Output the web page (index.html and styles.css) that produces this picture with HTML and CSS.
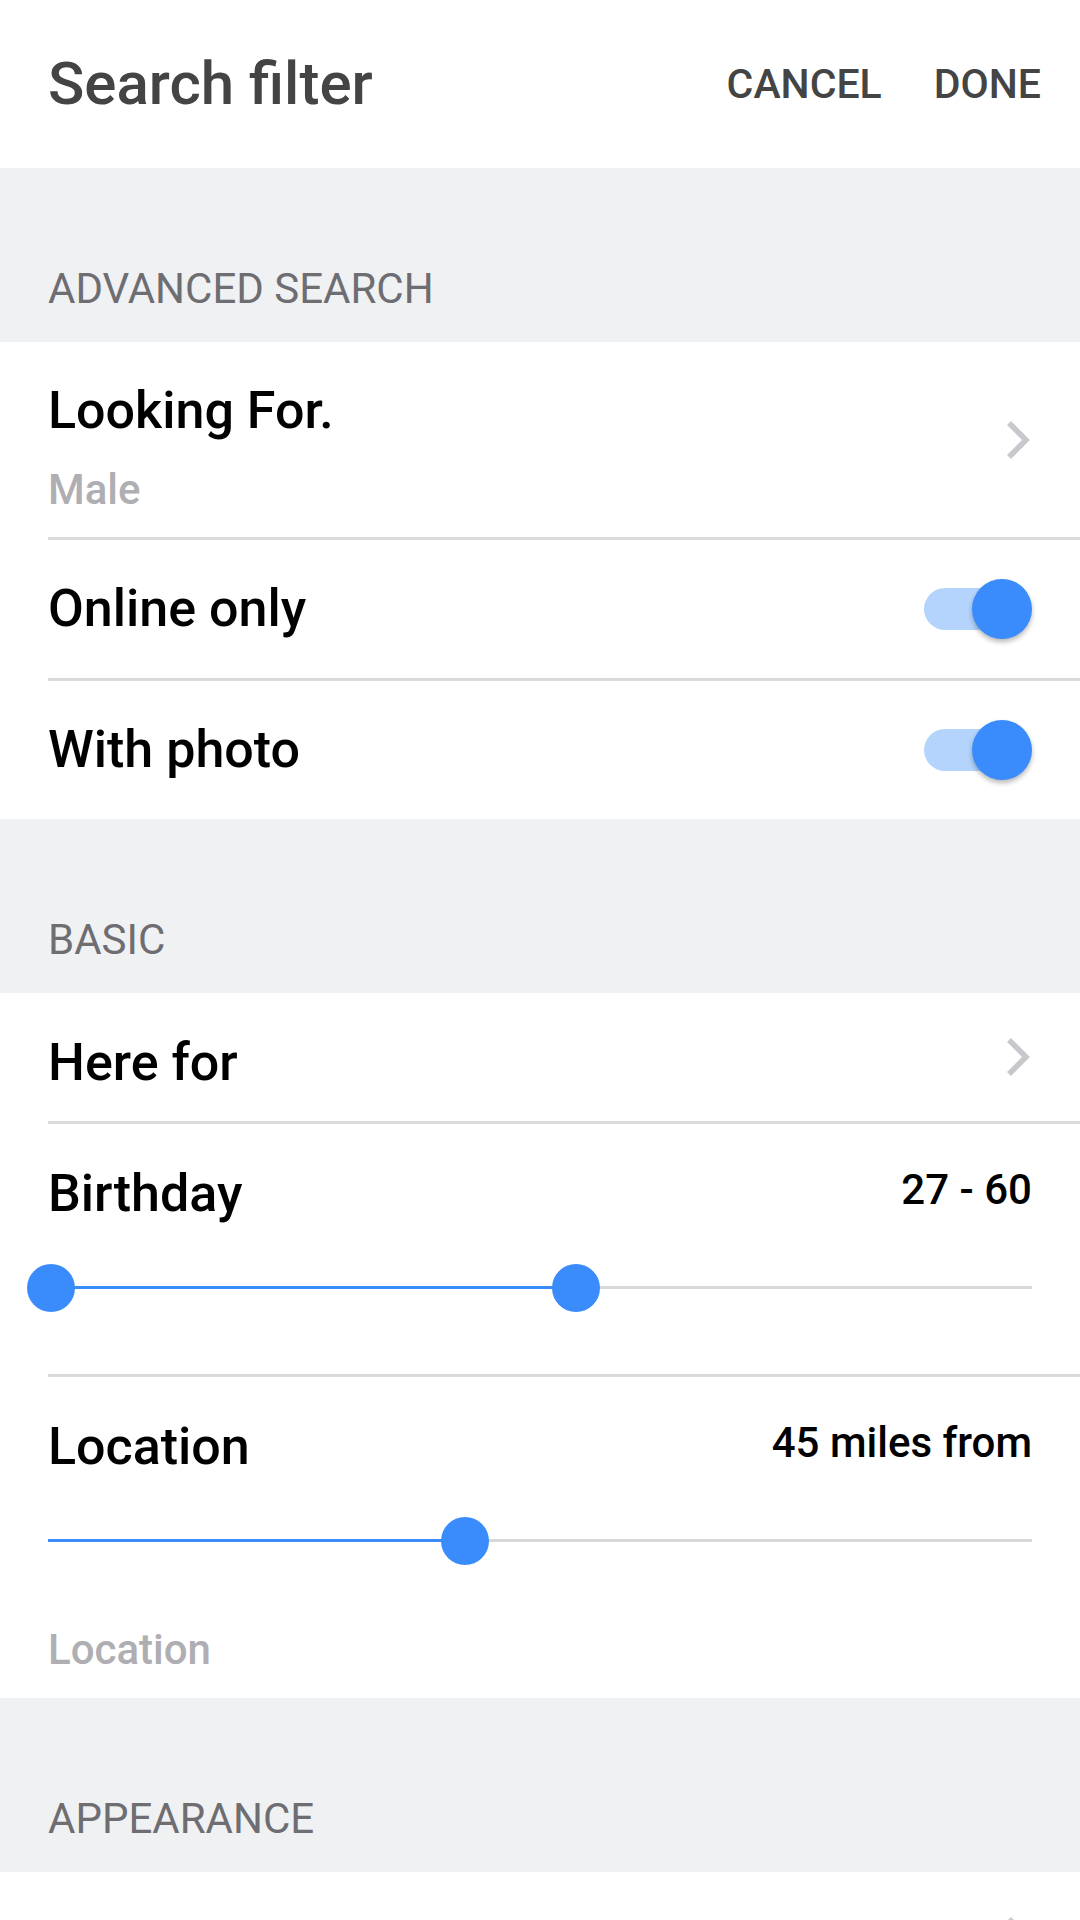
FILE: index.html
```html
<!DOCTYPE html>
<html lang="en">
<head>
  <meta charset="UTF-8">
  <title>Search filter</title>
  <link rel="stylesheet" href="styles.css">
</head>
<body>
  <header class="topbar">
    <h1 class="title">Search filter</h1>
    <div class="actions">
      <span class="action">CANCEL</span>
      <span class="action">DONE</span>
    </div>
  </header>

  <div class="section-head">ADVANCED SEARCH</div>

  <div class="row row-link">
    <div class="row-text">
      <div class="label">Looking For.</div>
      <div class="sublabel">Male</div>
    </div>
    <svg class="chevron" viewBox="0 0 26 40" width="26" height="40"><polyline points="3,3 20,20 3,37" /></svg>
  </div>

  <div class="row row-toggle">
    <div class="label">Online only</div>
    <div class="switch"><span class="switch-track"></span><span class="switch-thumb"></span></div>
  </div>

  <div class="row row-toggle last">
    <div class="label">With photo</div>
    <div class="switch"><span class="switch-track"></span><span class="switch-thumb"></span></div>
  </div>

  <div class="section-head">BASIC</div>

  <div class="row row-link row-short">
    <div class="label">Here for</div>
    <svg class="chevron" viewBox="0 0 26 40" width="26" height="40"><polyline points="3,3 20,20 3,37" /></svg>
  </div>

  <div class="row row-range">
    <div class="range-head">
      <div class="label">Birthday</div>
      <div class="value">27 - 60</div>
    </div>
    <div class="slider">
      <span class="slider-track"></span>
      <span class="slider-fill" style="left: 0.3%; width: 53.4%;"></span>
      <span class="slider-thumb" style="left: 0.3%;"></span>
      <span class="slider-thumb" style="left: 53.7%;"></span>
    </div>
  </div>

  <div class="row row-range last">
    <div class="range-head">
      <div class="label">Location</div>
      <div class="value">45 miles from</div>
    </div>
    <div class="slider">
      <span class="slider-track"></span>
      <span class="slider-fill" style="left: 0; width: 42.4%;"></span>
      <span class="slider-thumb" style="left: 42.4%;"></span>
    </div>
    <div class="placeholder">Location</div>
  </div>

  <div class="section-head">APPEARANCE</div>

  <div class="row row-link row-short last">
    <div class="label"></div>
    <svg class="chevron" viewBox="0 0 26 40" width="26" height="40"><polyline points="3,3 20,20 3,37" /></svg>
  </div>
</body>
</html>
```

FILE: styles.css
```css
body {
  margin: 0;
  background: #fff;
  font-family: Roboto, "Liberation Sans", sans-serif;
  overflow: hidden;
}

.topbar {
  height: 168px;
  display: flex;
  align-items: center;
  justify-content: space-between;
  padding: 0 39px 0 48px;
  background: #fff;
}
.title {
  margin: 0;
  font-size: 60px;
  line-height: 60px;
  font-weight: 500;
  color: #444;
}
.actions {
  display: flex;
  gap: 52px;
}
.action {
  font-size: 41px;
  line-height: 42px;
  font-weight: 500;
  color: #444;
}

.section-head {
  height: 174px;
  box-sizing: border-box;
  padding: 96px 48px 0;
  background: #f0f1f3;
  font-size: 42px;
  line-height: 50px;
  color: #6d6d72;
}

.row {
  margin-left: 48px;
  padding-right: 48px;
  border-bottom: 3px solid #dadada;
  display: flex;
  align-items: center;
  justify-content: space-between;
}
.row.last {
  border-bottom: none;
}
.label {
  font-size: 52px;
  line-height: 64px;
  font-weight: 500;
  color: #000;
}
.sublabel {
  margin-top: 22px;
  font-size: 42px;
  line-height: 50px;
  font-weight: 500;
  color: #aeaeb3;
}

.row-link .row-text {
  padding: 37px 0 22px;
}
.row-short .label {
  padding: 38px 0 26px;
  min-height: 64px;
}
.chevron {
  display: block;
  fill: none;
  stroke: #c7c7cc;
  stroke-width: 5.5;
}

.row-toggle {
  padding-top: 37px;
  padding-bottom: 37px;
}
.switch {
  position: relative;
  width: 108px;
  height: 60px;
}
.switch-track {
  position: absolute;
  left: 0;
  top: 9px;
  width: 102px;
  height: 42px;
  border-radius: 21px;
  background: #b4d4fd;
}
.switch-thumb {
  position: absolute;
  right: 0;
  top: 0;
  width: 60px;
  height: 60px;
  border-radius: 50%;
  background: #3a8cfc;
  box-shadow: 0 3px 5px rgba(0, 0, 0, 0.28);
}

.row-range {
  display: block;
  padding-top: 38px;
  padding-bottom: 62px;
}
.row-range.last {
  padding-bottom: 23px;
}
.range-head {
  display: flex;
  justify-content: space-between;
  align-items: flex-start;
}
.value {
  margin-top: 3px;
  font-size: 42px;
  line-height: 50px;
  font-weight: 500;
  color: #000;
}
.slider {
  position: relative;
  height: 48px;
  margin-top: 38px;
}
.slider-track {
  position: absolute;
  left: 0;
  right: 0;
  top: 22px;
  height: 3px;
  background: #d8d8d8;
}
.slider-fill {
  position: absolute;
  top: 22px;
  height: 3px;
  background: #3a8cfc;
}
.slider-thumb {
  position: absolute;
  top: 0;
  width: 48px;
  height: 48px;
  margin-left: -24px;
  border-radius: 50%;
  background: #3a8cfc;
}
.placeholder {
  margin-top: 60px;
  font-size: 42px;
  line-height: 50px;
  font-weight: 500;
  color: #aeaeb3;
}
```
